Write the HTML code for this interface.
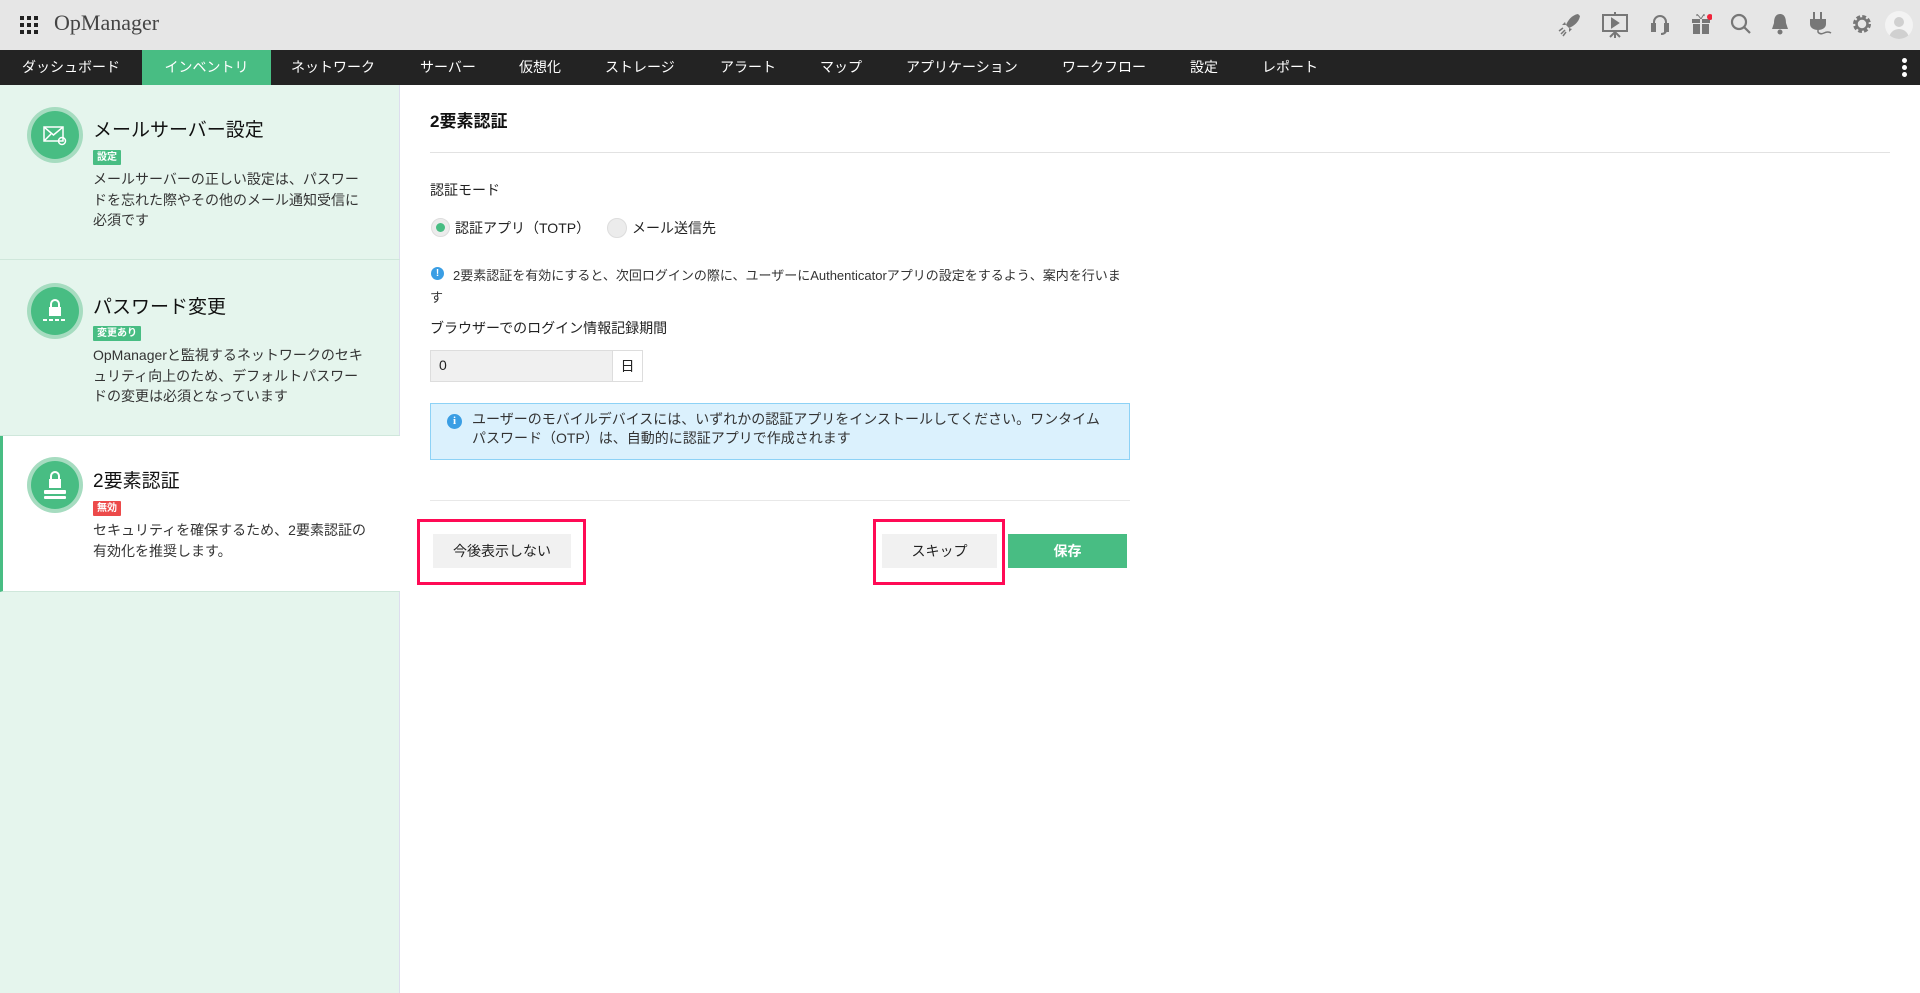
<!DOCTYPE html>
<html><head><meta charset="utf-8"><style>
*{margin:0;padding:0;box-sizing:border-box}
body{width:1920px;height:993px;overflow:hidden;font-family:"Liberation Sans","Noto Sans CJK JP",sans-serif;background:#fff;color:#222;position:relative}
.abs{position:absolute}
#hdr{left:0;top:0;width:1920px;height:50px;background:#e6e6e6}
#nav{left:0;top:50px;width:1920px;height:35px;background:#232323}
.nv{position:absolute;top:0;height:35px;line-height:35px;color:#fff;font-size:14px;white-space:nowrap}
#side{left:0;top:85px;width:400px;height:908px;background:#e5f5ed;border-right:1px solid #dde}
.sec{position:absolute;left:0;width:400px;border-bottom:1px solid #cfe7db}
.ic{position:absolute;left:31px;width:48px;height:48px;border-radius:50%;background:#48bd83;box-shadow:0 0 0 4px #a6dcc0}
.st{position:absolute;left:93px;font-size:19px;color:#111;white-space:nowrap}
.bd{position:absolute;left:93px;height:15px;line-height:15px;font-size:10px;color:#fff;padding:0 4px;border-radius:1px;font-weight:bold}
.ds{position:absolute;left:93px;width:272px;font-size:14px;line-height:20.5px;color:#333}
.t{position:absolute;white-space:nowrap;font-size:14px;color:#222}
.btn{position:absolute;height:34px;line-height:34px;text-align:center;font-size:14px}
.red{position:absolute;border:3px solid #ff0a55}
</style></head><body>
<div id="hdr" class="abs">
 <svg class="abs" style="left:20px;top:16px" width="18" height="18" viewBox="0 0 18 18" fill="#222"><rect x="0" y="0" width="4" height="4"/><rect x="7" y="0" width="4" height="4"/><rect x="14" y="0" width="4" height="4"/><rect x="0" y="7" width="4" height="4"/><rect x="7" y="7" width="4" height="4"/><rect x="14" y="7" width="4" height="4"/><rect x="0" y="14" width="4" height="4"/><rect x="7" y="14" width="4" height="4"/><rect x="14" y="14" width="4" height="4"/></svg>
 <div class="abs" style="left:54px;top:10px;font-family:'Liberation Serif',serif;font-size:22px;color:#444">OpManager</div>
 <svg class="abs" style="left:1558px;top:12px" width="24" height="26" viewBox="0 0 24 26" fill="#777"><path d="M20 2 C14 3 10 8 8 13 L11 16 C16 14 21 10 22 4Z"/><path d="M8 13 L4 13 L7 10Z M11 16 L11 20 L14 17Z"/><path d="M3 22 L7 18 M5 24 L8 20 M1 19 L5 16" stroke="#777" stroke-width="1.5"/></svg>
 <svg class="abs" style="left:1601px;top:12px" width="28" height="26" viewBox="0 0 28 26" fill="none" stroke="#777" stroke-width="2"><rect x="2" y="3" width="24" height="16"/><path d="M14 0 V3 M14 19 V26 M9 25 L14 20 L19 25"/><path d="M11 7 L17 11 L11 15Z" fill="#777"/></svg>
 <svg class="abs" style="left:1651px;top:13px" width="18" height="24" viewBox="0 0 18 24" fill="none" stroke="#777" stroke-width="2"><path d="M3 13 V9 A6 6 0 0 1 15 9 V13"/><rect x="1" y="11" width="3" height="7" fill="#777"/><rect x="14" y="11" width="3" height="7" fill="#777"/><path d="M15 18 Q14 21 10 21"/></svg>
 <svg class="abs" style="left:1690px;top:10px" width="22" height="26" viewBox="0 0 22 26" fill="#777"><rect x="2" y="9" width="18" height="4"/><rect x="3" y="14" width="16" height="10"/><rect x="10" y="9" width="2" height="15" fill="#e6e6e6"/><path d="M11 9 Q6 2 7 6 M11 9 Q15 2 14 6" stroke="#777" fill="none"/><circle cx="20" cy="7" r="3" fill="#f0243a"/></svg>
 <svg class="abs" style="left:1730px;top:13px" width="22" height="22" viewBox="0 0 22 22" fill="none" stroke="#777" stroke-width="2.2"><circle cx="9" cy="9" r="7"/><path d="M14 14 L20 20"/></svg>
 <svg class="abs" style="left:1771px;top:13px" width="18" height="22" viewBox="0 0 18 22" fill="#777"><path d="M9 1 C4 1 3 6 3 10 L1 16 H17 L15 10 C15 6 14 1 9 1Z"/><circle cx="9" cy="19" r="2.5"/></svg>
 <svg class="abs" style="left:1808px;top:11px" width="24" height="26" viewBox="0 0 24 26" fill="#777"><rect x="5" y="1" width="2" height="7"/><rect x="12" y="1" width="2" height="7"/><path d="M2 8 H18 V13 C18 17 14 19 10 19 C6 19 2 17 2 13Z"/><path d="M10 19 V21 Q12 24 16 22 T23 22" stroke="#777" stroke-width="1.5" fill="none"/></svg>
 <svg class="abs" style="left:1851px;top:13px" width="22" height="22" viewBox="0 0 22 22"><circle cx="11" cy="11" r="7" fill="none" stroke="#777" stroke-width="4" stroke-dasharray="3.5 2"/><circle cx="11" cy="11" r="5.5" fill="none" stroke="#777" stroke-width="2.5"/></svg>
 <div class="abs" style="left:1885px;top:11px;width:28px;height:28px;border-radius:50%;background:#f3f3f3;overflow:hidden"><div class="abs" style="left:9px;top:6px;width:10px;height:10px;border-radius:50%;background:#d0d0d0"></div><div class="abs" style="left:4px;top:18px;width:20px;height:14px;border-radius:10px 10px 0 0;background:#d0d0d0"></div></div>
</div>
<div id="nav" class="abs">
 <div class="nv" style="left:22px">ダッシュボード</div>
 <div class="nv" style="left:142px;width:129px;background:#48bd83;text-align:center">インベントリ</div>
 <div class="nv" style="left:291px">ネットワーク</div>
 <div class="nv" style="left:420px">サーバー</div>
 <div class="nv" style="left:519px">仮想化</div>
 <div class="nv" style="left:605px">ストレージ</div>
 <div class="nv" style="left:720px">アラート</div>
 <div class="nv" style="left:820px">マップ</div>
 <div class="nv" style="left:906px">アプリケーション</div>
 <div class="nv" style="left:1062px">ワークフロー</div>
 <div class="nv" style="left:1190px">設定</div>
 <div class="nv" style="left:1262px">レポート</div>
 <div class="abs" style="left:1902px;top:8px;width:5px;height:5px;border-radius:50%;background:#fff"></div>
 <div class="abs" style="left:1902px;top:15px;width:5px;height:5px;border-radius:50%;background:#fff"></div>
 <div class="abs" style="left:1902px;top:22px;width:5px;height:5px;border-radius:50%;background:#fff"></div>
</div>
<div id="side" class="abs">
 <div class="sec" style="top:0;height:175px">
  <div class="ic" style="top:26px"><svg width="48" height="48" viewBox="0 0 48 48" fill="none" stroke="#fff" stroke-width="1.5"><rect x="13" y="16" width="19" height="14"/><path d="M13 16 L22.5 24 L32 16 M13 30 L20 23"/><circle cx="31" cy="30" r="3.5"/></svg></div>
  <div class="st" style="top:30px">メールサーバー設定</div>
  <div class="bd" style="top:65px;background:#48bd83">設定</div>
  <div class="ds" style="top:84px">メールサーバーの正しい設定は、パスワードを忘れた際やその他のメール通知受信に必須です</div>
 </div>
 <div class="sec" style="top:175px;height:176px">
  <div class="ic" style="top:27px"><svg width="48" height="48" viewBox="0 0 48 48" fill="#fff"><path d="M20 20 V17 A4 4 0 0 1 28 17 V20" stroke="#fff" stroke-width="2" fill="none"/><rect x="18" y="20" width="12" height="9"/><path d="M12 33 H36" stroke="#fff" stroke-width="2" stroke-dasharray="4 2"/></svg></div>
  <div class="st" style="top:32px">パスワード変更</div>
  <div class="bd" style="top:66px;background:#48bd83">変更あり</div>
  <div class="ds" style="top:85px">OpManagerと監視するネットワークのセキュリティ向上のため、デフォルトパスワードの変更は必須となっています</div>
 </div>
 <div class="sec" style="top:351px;height:156px;background:#fff;border-left:3px solid #48bd83">
  <div class="ic" style="top:25px;left:28px"><svg width="48" height="48" viewBox="0 0 48 48" fill="#fff"><path d="M20 18 V15 A4 4 0 0 1 28 15 V18" stroke="#fff" stroke-width="2" fill="none"/><rect x="18" y="18" width="12" height="9"/><rect x="13" y="29" width="22" height="4" rx="1"/><rect x="13" y="35" width="22" height="3" rx="1"/></svg></div>
  <div class="st" style="top:30px;left:90px">2要素認証</div>
  <div class="bd" style="top:65px;left:90px;background:#ec4a4a">無効</div>
  <div class="ds" style="top:84px;left:90px;width:278px">セキュリティを確保するため、2要素認証の有効化を推奨します。</div>
 </div>
</div>
<div class="t" style="left:430px;top:107px;font-size:17px;font-weight:bold;color:#111">2要素認証</div>
<div class="abs" style="left:430px;top:152px;width:1460px;height:1px;background:#e2e2e2"></div>
<div class="t" style="left:430px;top:180px">認証モード</div>
<div class="abs" style="left:431px;top:218px;width:19px;height:19px;border-radius:50%;background:#ececec;border:1px solid #ddd"><div class="abs" style="left:4px;top:4px;width:9px;height:9px;border-radius:50%;background:#48bd83"></div></div>
<div class="t" style="left:455px;top:218px">認証アプリ（TOTP）</div>
<div class="abs" style="left:607px;top:218px;width:20px;height:20px;border-radius:50%;background:#ececec;border:1px solid #ddd"></div>
<div class="t" style="left:632px;top:218px">メール送信先</div>
<div class="abs" style="left:431px;top:267px;width:13px;height:13px;border-radius:50%;background:#3a9ee4;color:#fff;font-size:10px;font-weight:bold;text-align:center;line-height:13px">!</div>
<div class="abs" style="left:430px;top:265px;width:700px;font-size:13px;line-height:22px;color:#333;text-indent:23px">2要素認証を有効にすると、次回ログインの際に、ユーザーにAuthenticatorアプリの設定をするよう、案内を行います</div>
<div class="t" style="left:430px;top:318px">ブラウザーでのログイン情報記録期間</div>
<div class="abs" style="left:430px;top:350px;width:213px;height:32px;border:1px solid #ddd;background:#f0f0f0"><div class="abs" style="left:8px;top:6px;font-size:14px">0</div><div class="abs" style="left:181px;top:0;width:30px;height:30px;background:#fff;border-left:1px solid #ddd;text-align:center;line-height:30px;font-size:14px">日</div></div>
<div class="abs" style="left:430px;top:403px;width:700px;height:57px;background:#dbf1fd;border:1px solid #8dd2f6">
 <div class="abs" style="left:16px;top:10px;width:15px;height:15px;border-radius:50%;background:#3a9ee4;color:#fff;font-size:11px;font-weight:bold;text-align:center;line-height:15px;font-family:'Liberation Serif',serif">i</div>
 <div class="abs" style="left:41px;top:6px;width:640px;font-size:14px;line-height:19px;color:#333">ユーザーのモバイルデバイスには、いずれかの認証アプリをインストールしてください。ワンタイムパスワード（OTP）は、自動的に認証アプリで作成されます</div>
</div>
<div class="abs" style="left:430px;top:500px;width:700px;height:1px;background:#e8e8e8"></div>
<div class="red" style="left:417px;top:519px;width:169px;height:66px"></div>
<div class="btn" style="left:433px;top:534px;width:138px;background:#f1f1f1;color:#222">今後表示しない</div>
<div class="red" style="left:873px;top:519px;width:132px;height:66px"></div>
<div class="btn" style="left:882px;top:534px;width:115px;background:#f1f1f1;color:#222">スキップ</div>
<div class="btn" style="left:1008px;top:534px;width:119px;background:#48bd83;color:#fff;font-weight:bold">保存</div>
</body></html>
